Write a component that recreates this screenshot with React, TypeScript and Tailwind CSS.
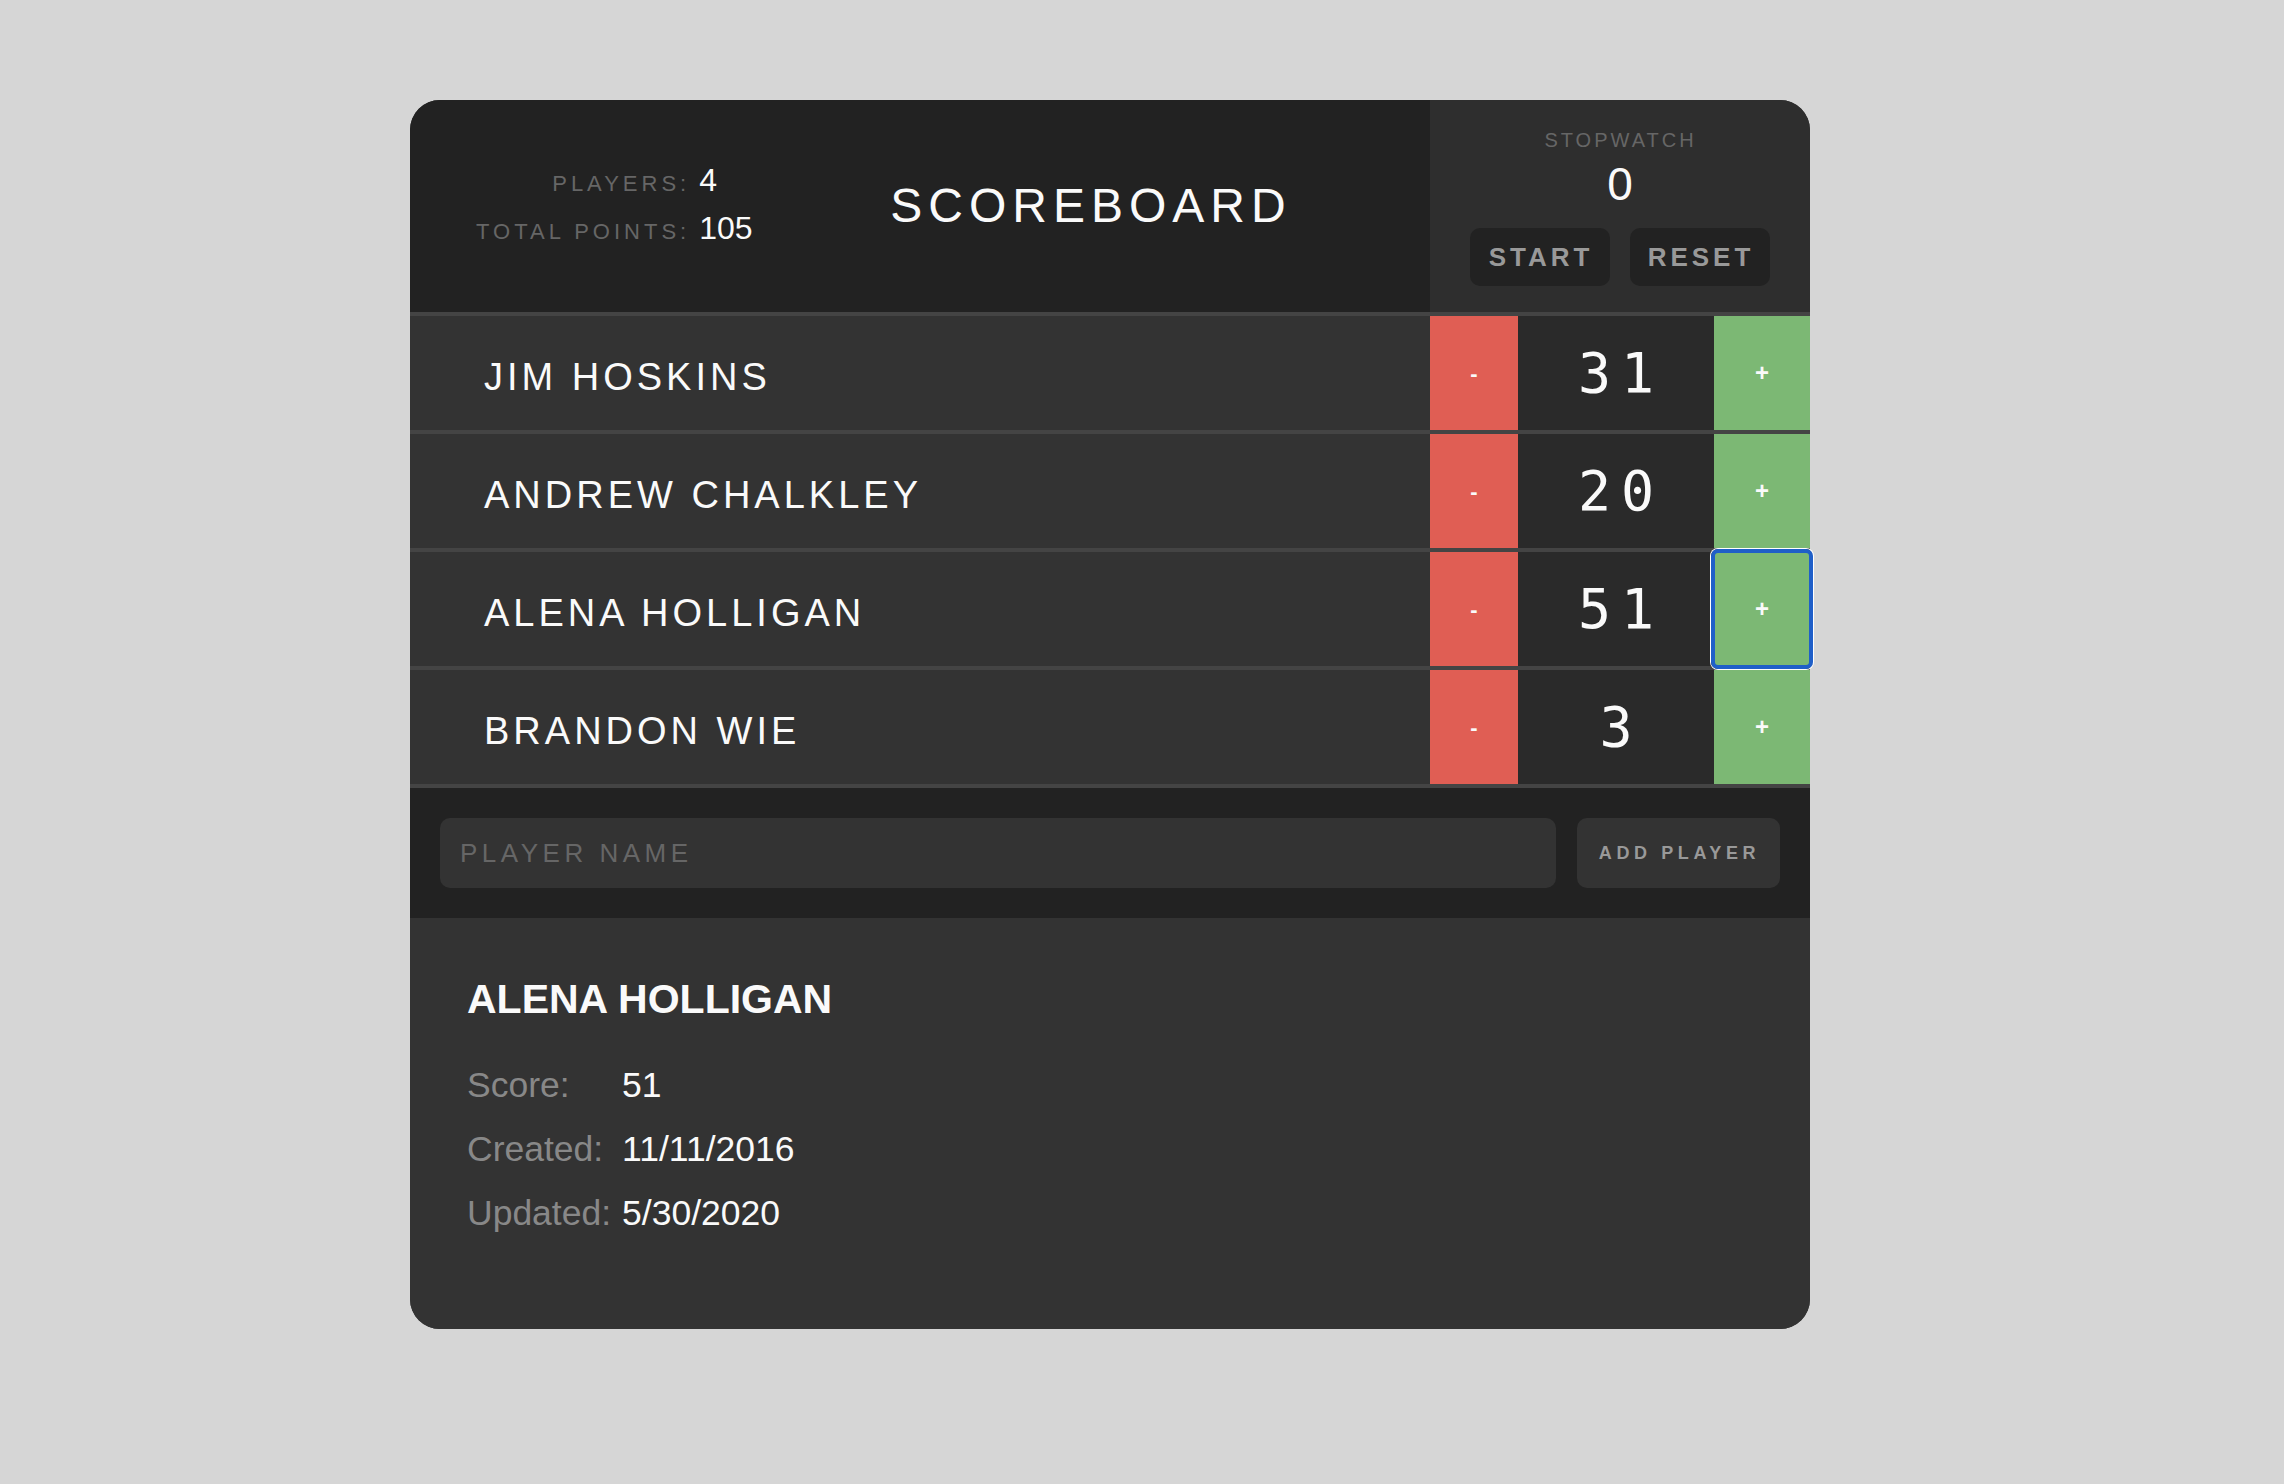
import { useState } from "react";

type Player = { name: string; score: number };

const initialPlayers: Player[] = [
  { name: "Jim Hoskins", score: 31 },
  { name: "Andrew Chalkley", score: 20 },
  { name: "Alena Holligan", score: 51 },
  { name: "Brandon Wie", score: 3 },
];

export default function App() {
  const [players, setPlayers] = useState(initialPlayers);
  const [newName, setNewName] = useState("");
  const selected = players[2];
  const total = players.reduce((sum, p) => sum + p.score, 0);

  const changeScore = (index: number, delta: number) => {
    setPlayers((prev) => prev.map((p, i) => (i === index ? { ...p, score: p.score + delta } : p)));
  };

  return (
    <div className="min-h-screen bg-[#d6d6d6] pt-[100px] pl-[410px] font-['Liberation_Sans',Arial,sans-serif]">
      <div className="w-[1400px] rounded-[30px] bg-[#333]">
        {/* Header */}
        <header className="flex h-[216px] border-b-4 border-[#444]">
          <div className="flex flex-1 rounded-tl-[30px] bg-[#222]">
            <div className="flex w-[340px] shrink-0 items-center pl-[66px]">
              <div className="grid grid-cols-[auto_auto] items-baseline gap-x-[9px] whitespace-nowrap">
                <span className="text-right text-[22px] leading-[44px] tracking-[4px] text-[#666]">PLAYERS:</span>
                <span className="text-[32px] leading-[44px] text-[#fafafa]">{players.length}</span>
                <span className="text-right text-[22px] leading-[44px] tracking-[4px] text-[#666]">TOTAL POINTS:</span>
                <span className="text-[32px] leading-[44px] text-[#fafafa]">{total}</span>
              </div>
            </div>
            <h1 className="flex flex-1 items-center justify-center pl-[2px] text-[48px] tracking-[6px] text-[#fafafa]">
              SCOREBOARD
            </h1>
          </div>

          {/* Stopwatch */}
          <div className="flex w-[380px] flex-col items-center rounded-tr-[30px] bg-[#2e2e2e] pt-[28px]">
            <span className="pl-[1px] text-[20px] leading-[24px] tracking-[3px] text-[#666]">STOPWATCH</span>
            <span className="mt-[7px] text-[46px] leading-[50px] text-[#fafafa]">0</span>
            <div className="mt-[19px] flex gap-[20px]">
              <button className="h-[58px] w-[140px] rounded-[10px] bg-[#222] pl-[2px] text-[26px] font-bold tracking-[4px] text-[#999]">
                START
              </button>
              <button className="h-[58px] w-[140px] rounded-[10px] bg-[#222] pl-[2px] text-[26px] font-bold tracking-[4px] text-[#999]">
                RESET
              </button>
            </div>
          </div>
        </header>

        {/* Players */}
        {players.map((player, i) => (
          <div key={player.name} className="flex h-[118px] border-b-4 border-[#444]">
            <div className="flex flex-1 items-center bg-[#333] pl-[74px] pt-[8px] text-[38px] uppercase tracking-[4px] text-[#fafafa]">
              {player.name}
            </div>
            <button
              onClick={() => changeScore(i, -1)}
              className="w-[88px] bg-[#e05e54] text-[22px] font-bold text-[#fafafa]"
            >
              -
            </button>
            <div className="flex w-[196px] items-center justify-center bg-[#2a2a2a] pl-[10px] font-['DejaVu_Sans_Mono',monospace] text-[55px] tracking-[10px] text-[#fafafa]">
              {player.score}
            </div>
            <button
              onClick={() => changeScore(i, 1)}
              className="relative w-[96px] bg-[#7cb874] text-[24px] font-bold text-[#fafafa]"
            >
              +
              {i === 2 && (
                <span className="pointer-events-none absolute -inset-[3px] rounded-[7px] border-4 border-[#1f5fc8] shadow-[0_0_0_1px_#fff]" />
              )}
            </button>
          </div>
        ))}

        {/* Add player form */}
        <form
          className="flex gap-[21px] bg-[#222] p-[30px]"
          onSubmit={(e) => {
            e.preventDefault();
            if (!newName.trim()) return;
            setPlayers((prev) => [...prev, { name: newName, score: 0 }]);
            setNewName("");
          }}
        >
          <input
            type="text"
            value={newName}
            onChange={(e) => setNewName(e.target.value)}
            placeholder="PLAYER NAME"
            className="h-[70px] flex-1 rounded-[10px] bg-[#333] pl-[20px] text-[26px] tracking-[4.5px] text-[#fafafa] outline-none placeholder:text-[#666]"
          />
          <button
            type="submit"
            className="h-[70px] w-[203px] rounded-[10px] bg-[#333] pl-[2px] text-[18px] font-bold tracking-[4.6px] text-[#999]"
          >
            ADD PLAYER
          </button>
        </form>

        {/* Player detail */}
        <div className="rounded-b-[30px] bg-[#333] pb-[84px] pl-[57px] pt-[58px]">
          <h2 className="text-[41px] font-bold uppercase leading-[47px] text-[#fafafa]">{selected.name}</h2>
          <div className="mt-[30px] grid grid-cols-[auto_auto] justify-start gap-x-[11px] text-[35.5px] leading-[64px]">
            <span className="text-[#888]">Score:</span>
            <span className="text-[#fafafa]">{selected.score}</span>
            <span className="text-[#888]">Created:</span>
            <span className="text-[#fafafa]">11/11/2016</span>
            <span className="text-[#888]">Updated:</span>
            <span className="text-[#fafafa]">5/30/2020</span>
          </div>
        </div>
      </div>
    </div>
  );
}
